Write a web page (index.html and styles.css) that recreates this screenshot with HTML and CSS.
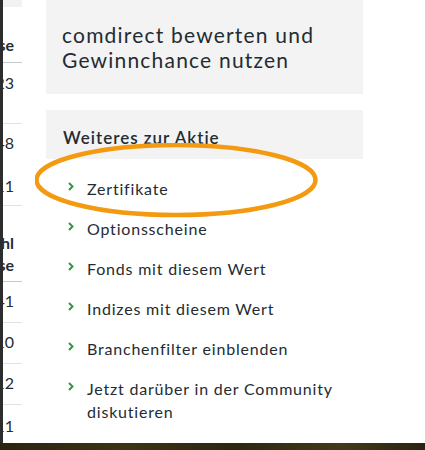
FILE: index.html
```html
<!DOCTYPE html>
<html lang="de">
<head>
<meta charset="utf-8">
<title>comdirect – Weiteres zur Aktie</title>
<link rel="stylesheet" href="styles.css">
</head>
<body>
<div class="screen">
  <div class="window">
    <div class="edge"></div>
    <div class="table-col">
      <div class="cell cell-top"></div>
      <div class="cell cell-head"><span>Kurse</span></div>
      <div class="cell cell-r1"><span>1.223</span></div>
      <div class="cell cell-r2"><span>2.348</span><span>4.211</span></div>
      <div class="cell cell-head2"><span>Anzahl</span><span>Kurse</span></div>
      <div class="cell cell-r"><span>1.241</span></div>
      <div class="cell cell-r"><span>3.010</span></div>
      <div class="cell cell-r"><span>1.212</span></div>
      <div class="cell cell-last"><span>2.211</span></div>
    </div>
    <main class="main-col">
      <section class="box box-rate">
        <p>comdirect bewerten und Gewinnchance nutzen</p>
      </section>
      <section class="box box-title">
        <h2>Weiteres zur Aktie</h2>
      </section>
      <ul class="links">
        <li><span class="chev"><svg viewBox="0 0 6 9" width="6" height="9"><path d="M1 1 L4.5 4.5 L1 8" fill="none" stroke="#2e9a3e" stroke-width="2"/></svg></span><a>Zertifikate</a></li>
        <li><span class="chev"><svg viewBox="0 0 6 9" width="6" height="9"><path d="M1 1 L4.5 4.5 L1 8" fill="none" stroke="#2e9a3e" stroke-width="2"/></svg></span><a>Optionsscheine</a></li>
        <li><span class="chev"><svg viewBox="0 0 6 9" width="6" height="9"><path d="M1 1 L4.5 4.5 L1 8" fill="none" stroke="#2e9a3e" stroke-width="2"/></svg></span><a>Fonds mit diesem Wert</a></li>
        <li><span class="chev"><svg viewBox="0 0 6 9" width="6" height="9"><path d="M1 1 L4.5 4.5 L1 8" fill="none" stroke="#2e9a3e" stroke-width="2"/></svg></span><a>Indizes mit diesem Wert</a></li>
        <li><span class="chev"><svg viewBox="0 0 6 9" width="6" height="9"><path d="M1 1 L4.5 4.5 L1 8" fill="none" stroke="#2e9a3e" stroke-width="2"/></svg></span><a>Branchenfilter einblenden</a></li>
        <li><span class="chev"><svg viewBox="0 0 6 9" width="6" height="9"><path d="M1 1 L4.5 4.5 L1 8" fill="none" stroke="#2e9a3e" stroke-width="2"/></svg></span><a>Jetzt darüber in der Community diskutieren</a></li>
      </ul>
      <svg class="mark" width="300" height="90" viewBox="0 0 300 90">
        <ellipse cx="141" cy="37" rx="139.5" ry="35" fill="none" stroke="#f39a10" stroke-width="4.5"/>
      </svg>
    </main>
  </div>
  <div class="desk"></div>
</div>
</body>
</html>
```
FILE: styles.css
```css
html, body {
  margin: 0;
  padding: 0;
  background: #ffffff;
}
.screen {
  width: 425px;
  height: 450px;
  overflow: hidden;
  display: flex;
  flex-direction: column;
  font-family: Lato, "Noto Sans", sans-serif;
  color: #232c32;
}
.window {
  height: 443px;
  display: flex;
  background: #ffffff;
  overflow: hidden;
}
.edge {
  width: 3px;
  flex: none;
  background: #2d2d2d;
}
.table-col {
  width: 19px;
  flex: none;
  overflow: hidden;
  display: flex;
  flex-direction: column;
  font-size: 16px;
  letter-spacing: 0;
}
.cell {
  position: relative;
  display: flex;
  flex-direction: column;
  align-items: flex-end;
  padding-right: 8px;
  box-sizing: border-box;
  border-bottom: 1px solid #e3e3e3;
  line-height: 22px;
  white-space: nowrap;
}
.cell-top { height: 7px; background: #f2f2f2; border-bottom: none; }
.cell-head { height: 56px; padding-top: 27px; font-weight: 700; border-bottom-color: #c9c9c9; }
.cell-r1 { height: 61px; padding-top: 9px; }
.cell-r2 { height: 82px; padding-top: 8px; row-gap: 21px; }
.cell-head2 { height: 77px; padding-top: 26px; font-weight: 700; border-bottom-color: #c9c9c9; }
.cell-r { height: 41px; padding-top: 8px; }
.cell-last { height: 38px; padding-top: 10px; border-bottom: none; }

.main-col {
  position: relative;
  width: 317px;
  flex: none;
  margin-left: 24px;
  display: flex;
  flex-direction: column;
}
.box {
  background: #f3f3f3;
  padding-left: 16px;
  box-sizing: border-box;
}
.box-rate {
  height: 94px;
  padding-top: 22px;
}
.box-rate p {
  margin: 0;
  font-size: 21px;
  line-height: 25px;
  width: 295px;
  letter-spacing: 1.2px;
}
.box-title {
  margin-top: 16px;
  height: 49px;
  display: flex;
  align-items: center;
  padding-left: 17px;
  padding-top: 6px;
}
.box-title h2 {
  margin: 0;
  font-size: 17px;
  font-weight: 600;
  letter-spacing: 1px;
}
.links {
  list-style: none;
  margin: 0;
  padding: 18px 0 0 22px;
  display: flex;
  flex-direction: column;
  row-gap: 17px;
  font-size: 16px;
  line-height: 23px;
}
.links li {
  display: flex;
  align-items: flex-start;
}
.chev {
  width: 19px;
  flex: none;
  display: flex;
  padding-top: 5px;
}
.links a {
  color: #232c32;
  letter-spacing: 0.8px;
  max-width: 260px;
}
.mark {
  position: absolute;
  left: -11px;
  top: 143px;
}
.desk {
  height: 7px;
  background: linear-gradient(90deg, #2a2410 0%, #3b3416 30%, #2c2612 55%, #413a1a 80%, #2a2310 100%);
}
```
